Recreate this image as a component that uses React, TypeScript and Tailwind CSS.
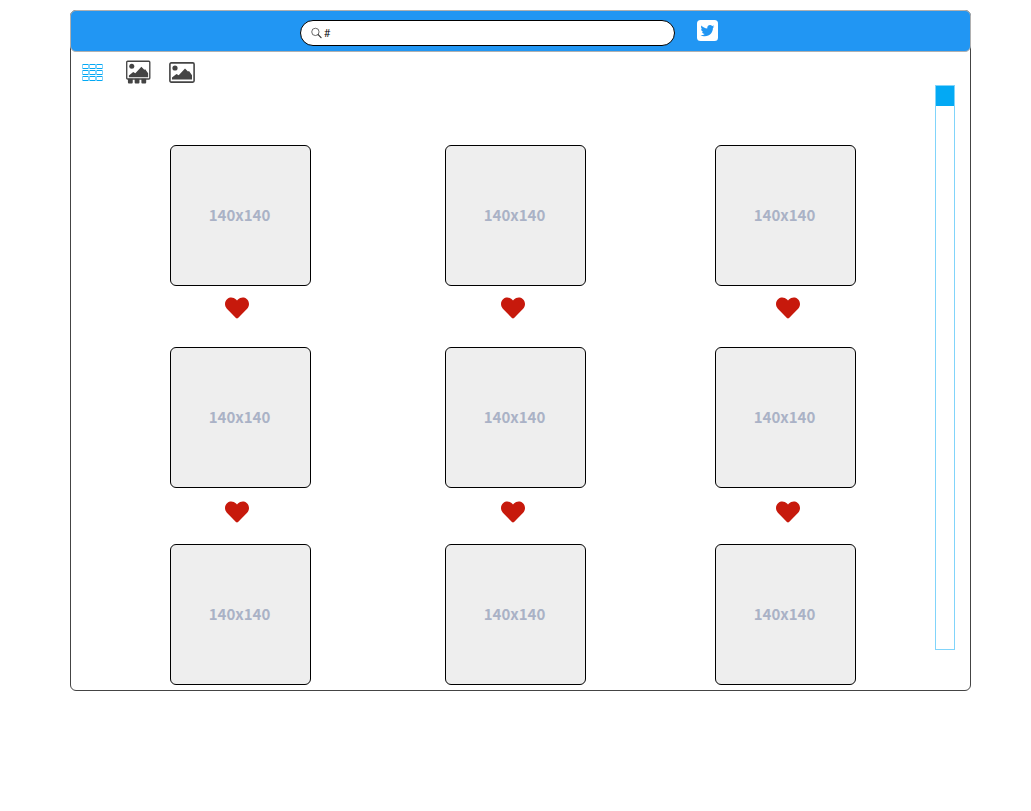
import { FaHeart } from "react-icons/fa";

const cellColumns = [0, 7, 14];
const cellRows = [0, 6, 12];

function GridIcon() {
  return (
    <svg width="21" height="17" viewBox="0 0 21 17" fill="none" aria-hidden="true">
      {cellColumns.map((x) =>
        cellRows.map((y) => (
          <g key={`${x}-${y}`}>
            <path d={`M${x + 0.5} ${y}v5M${x + 6.5} ${y}v5`} stroke="#7fd2fc" />
            <path d={`M${x + 1} ${y + 0.5}h5M${x + 1} ${y + 4.5}h5`} stroke="#03a9f4" />
          </g>
        )),
      )}
    </svg>
  );
}

function Landscape() {
  return (
    <>
      <circle cx="6" cy="6" r="2.6" />
      <path d="M3 17.5v-2l4.5-3.5 2.2 1.3 6.3-6.8 3 3 1-.4 3 4.2v4.2z" />
    </>
  );
}

function SlidesIcon() {
  return (
    <svg width="25" height="26" viewBox="0 0 26 26" fill="#444" aria-hidden="true">
      <rect x="0.75" y="0.75" width="24" height="18.5" rx="1" fill="none" stroke="#444" strokeWidth="1.4" />
      <Landscape />
      <path d="M2 19h5v4q0 1-1 1H3q-1 0-1-1zM9 19h5v4q0 1-1 1h-3q-1 0-1-1zM16 19h5v4q0 1-1 1h-3q-1 0-1-1z" />
    </svg>
  );
}

function PictureIcon() {
  return (
    <svg width="26" height="21" viewBox="0 0 26 21" fill="#444" aria-hidden="true">
      <rect x="0.9" y="0.9" width="24.2" height="19.2" rx="1.3" fill="none" stroke="#444" strokeWidth="1.6" />
      <Landscape />
    </svg>
  );
}

function SearchIcon() {
  return (
    <svg width="11" height="12" viewBox="0 0 12 12" fill="none" stroke="#333" aria-hidden="true">
      <circle cx="4.8" cy="4.8" r="4" strokeWidth="0.8" />
      <path d="M7.8 7.8l3.2 3.2" strokeWidth="1.3" strokeLinecap="round" />
    </svg>
  );
}

function TwitterIcon() {
  return (
    <svg width="24" height="24" viewBox="0 0 24 24" aria-hidden="true">
      <rect x="1" y="2" width="21" height="21" rx="3.5" fill="currentColor" />
      <path
        transform="translate(4.5 5.8) scale(0.027)"
        fill="#2196f3"
        d="M459.370 151.716c.325 4.548.325 9.097.325 13.645 0 138.720-105.583 298.558-298.558 298.558-59.452 0-114.680-17.219-161.137-47.106 8.447.974 16.568 1.299 25.340 1.299 49.055 0 94.213-16.568 130.274-44.832-46.132-.975-84.792-31.188-98.112-72.772 6.498.974 12.995 1.624 19.818 1.624 9.421 0 18.843-1.300 27.614-3.573-48.081-9.747-84.143-51.980-84.143-102.985v-1.299c13.969 7.797 30.214 12.670 47.431 13.319-28.264-18.843-46.781-51.005-46.781-87.391 0-19.492 5.197-37.360 14.294-52.954 51.655 63.675 129.300 105.258 216.365 109.807-1.624-7.797-2.599-15.918-2.599-24.040 0-57.828 46.782-104.934 104.934-104.934 30.213 0 57.502 12.670 76.670 33.137 23.715-4.548 46.456-13.320 66.599-25.340-7.798 24.366-24.366 44.833-46.132 57.827 21.117-2.273 41.584-8.122 60.426-16.243-14.292 20.791-32.161 39.308-52.628 54.253z"
      />
    </svg>
  );
}

function CardRow() {
  return (
    <div className="grid grid-cols-[275fr_270fr_141fr]">
      {[0, 1, 2].map((i) => (
        <div
          key={i}
          className="flex h-[141px] w-[141px] items-center justify-center rounded-md border border-black bg-[#eeeeee] pr-0.5 font-['Noto_Sans_CJK_SC',sans-serif] text-[15px] font-bold text-[#aab2c6]"
        >
          140x140
        </div>
      ))}
    </div>
  );
}

function HeartRow({ className }: { className: string }) {
  return (
    <div className={`flex items-start justify-between pr-14 pl-[55px] ${className}`}>
      {[0, 1, 2].map((i) => (
        <button key={i} type="button" aria-label="Like" className="text-[#c7190c]">
          <FaHeart className="h-6 w-6" />
        </button>
      ))}
    </div>
  );
}

export default function App() {
  return (
    <div className="min-h-screen bg-white pt-2.5 pr-[60px] pl-[70px] font-['Noto_Sans',sans-serif]">
      <div className="rounded-md border border-[#444]">
        <header className="-mx-px -mt-px grid h-[42px] grid-cols-[229fr_375fr_295fr] items-start rounded-md border border-[#b0b0b0] bg-[#2196f3]">
          <label className="col-start-2 mt-[9px] flex h-[26px] items-center gap-0.5 rounded-full border border-black bg-white px-2.5">
            <SearchIcon />
            <input
              type="text"
              defaultValue="#"
              aria-label="Search"
              className="min-w-0 flex-1 bg-transparent text-[10px] text-black outline-none"
            />
          </label>
          <a href="#twitter" aria-label="Twitter" className="mt-[7px] ml-[21px] block w-6 text-white">
            <TwitterIcon />
          </a>
        </header>
        <nav className="flex h-[33px] items-center pt-2 pl-[11px]">
          <button type="button" aria-label="Grid view" className="mr-[23px]">
            <GridIcon />
          </button>
          <button type="button" aria-label="Slide view" className="mr-[18px]">
            <SlidesIcon />
          </button>
          <button type="button" aria-label="Picture view">
            <PictureIcon />
          </button>
        </nav>
        <div className="flex items-start pr-[15px] pb-[5px] pl-[99px]">
          <main className="mr-[79px] flex-1 pt-[60px]">
            <CardRow />
            <HeartRow className="h-[61px] pt-2.5" />
            <CardRow />
            <HeartRow className="h-14 pt-3" />
            <CardRow />
          </main>
          <div className="h-[565px] w-5 border border-[#81d4fa]">
            <div className="h-5 bg-[#03a9f4]" />
          </div>
        </div>
      </div>
    </div>
  );
}
